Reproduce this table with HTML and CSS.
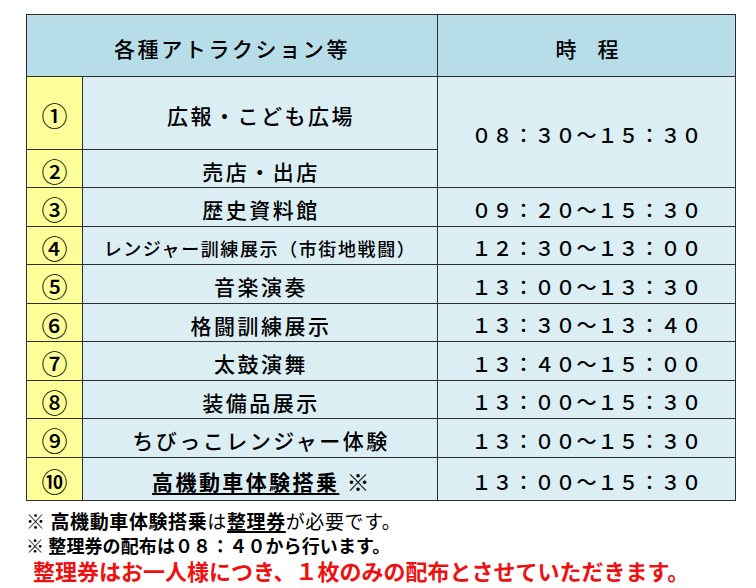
FILE: index.html
```html
<!DOCTYPE html>
<html lang="ja">
<head>
<meta charset="utf-8">
<title>各種アトラクション等 時程</title>
<link rel="stylesheet" href="styles.css">
</head>
<body>
<div class="page">
  <div class="schedule">
    <div class="hd hd-attr">各種アトラクション等</div>
    <div class="hd hd-time">時　程</div>

    <div class="num">①</div>
    <div class="name">広報・こども広場</div>
    <div class="time time-span">０８：３０～１５：３０</div>

    <div class="num">②</div>
    <div class="name">売店・出店</div>

    <div class="num">③</div>
    <div class="name">歴史資料館</div>
    <div class="time">０９：２０～１５：３０</div>

    <div class="num">④</div>
    <div class="name name-small">レンジャー訓練展示（市街地戦闘）</div>
    <div class="time">１２：３０～１３：００</div>

    <div class="num">⑤</div>
    <div class="name">音楽演奏</div>
    <div class="time">１３：００～１３：３０</div>

    <div class="num">⑥</div>
    <div class="name">格闘訓練展示</div>
    <div class="time">１３：３０～１３：４０</div>

    <div class="num">⑦</div>
    <div class="name">太鼓演舞</div>
    <div class="time">１３：４０～１５：００</div>

    <div class="num">⑧</div>
    <div class="name">装備品展示</div>
    <div class="time">１３：００～１５：３０</div>

    <div class="num">⑨</div>
    <div class="name">ちびっこレンジャー体験</div>
    <div class="time">１３：００～１５：３０</div>

    <div class="num">⑩</div>
    <div class="name name-bold"><span class="ul">高機動車体験搭乗</span>&nbsp;<span class="mark">※</span></div>
    <div class="time">１３：００～１５：３０</div>
  </div>

  <div class="notes">
    <p class="note note1"><b>※ 高機動車体験搭乗</b>は<b class="ul2">整理券</b>が必要です。</p>
    <p class="note note2">※ 整理券の配布は０８：４０から行います。</p>
    <p class="note note3">整理券はお一人様につき、１枚のみの配布とさせていただきます。</p>
  </div>
</div>
</body>
</html>
```

FILE: styles.css
```css
html, body {
  margin: 0;
  padding: 0;
  background: #ffffff;
}

body {
  font-family: "Noto Sans CJK JP", "Noto Sans", sans-serif;
  color: #000000;
}

.page {
  padding: 14px 0 0 26px;
}

.schedule {
  display: grid;
  width: 710px;
  box-sizing: border-box;
  grid-template-columns: 55px 354px 297px;
  grid-template-rows: 61px 72px 37px 38px 37px 38px 37px 38px 37px 38px 42px;
  gap: 1px;
  padding: 1px;
  background: #2e2e2e;
}

.schedule > div {
  display: flex;
  align-items: center;
  justify-content: center;
  box-sizing: border-box;
  padding-top: 4px;
  white-space: nowrap;
  font-weight: 500;
}

.hd {
  background: #b7dde8;
  font-size: 21px;
  letter-spacing: 2.6px;
  padding-top: 3px;
}

.hd-attr {
  grid-column: 1 / 3;
  padding-left: 0;
}

.hd-time {
  letter-spacing: 0;
  padding-left: 1px;
}

.num {
  background: #ffff99;
  font-size: 26px;
  line-height: 1;
}

.name {
  background: #dbeef4;
  font-size: 21px;
  letter-spacing: 2.5px;
  padding-left: 2px;
}

.schedule > .name-small {
  font-size: 18px;
  letter-spacing: 1.6px;
  padding-left: 0;
}

.schedule > .name-bold {
  font-weight: 700;
  letter-spacing: 2.4px;
  padding-left: 4px;
}

.ul {
  text-decoration: underline;
  text-decoration-thickness: 2px;
  text-underline-offset: 3px;
}

.mark {
  font-size: 23px;
}

.time {
  background: #dbeef4;
  font-size: 20px;
  letter-spacing: 1px;
  padding-left: 1px;
}

.time-span {
  grid-row: span 2;
}

.notes {
  padding-top: 8px;
}

.note {
  margin: 0;
  white-space: nowrap;
}

.note1 {
  font-size: 19px;
  line-height: 24px;
  font-weight: 400;
  letter-spacing: 0.6px;
}

.note1 b {
  font-weight: 700;
}

.ul2 {
  text-decoration: underline;
  text-decoration-thickness: 2px;
  text-underline-offset: 2px;
}

.note2 {
  font-size: 18px;
  line-height: 24px;
  font-weight: 700;
  letter-spacing: 0.1px;
}

.note3 {
  font-size: 22px;
  line-height: 26px;
  font-weight: 700;
  color: #ee1111;
  padding-left: 7px;
}
```
